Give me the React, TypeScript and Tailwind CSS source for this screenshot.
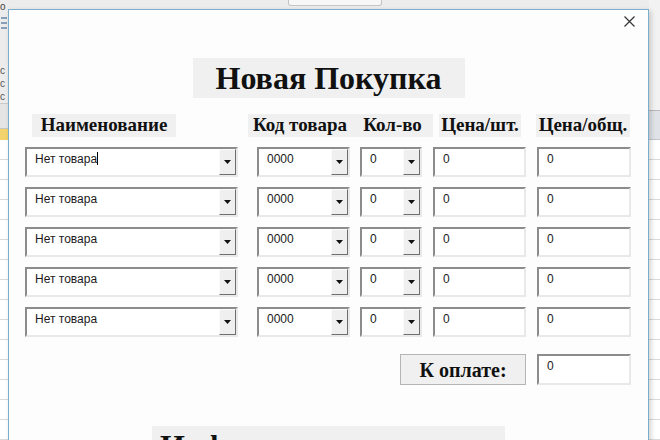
const serif = "font-['Liberation_Serif','Times_New_Roman',serif]";
const sans = "font-['Liberation_Sans',Tahoma,Arial,sans-serif]";

const sunken =
  "border-2 border-t-[#8c8c8c] border-l-[#8c8c8c] border-r-[#e9e9e9] border-b-[#e9e9e9] bg-white";

const Arrow = () => (
  <div className="w-[17px] h-full bg-[#efefef] border border-t-[#fbfbfb] border-l-[#fbfbfb] border-r-[#6f6f6f] border-b-[#6f6f6f] flex items-center justify-center">
    <svg width="7" height="4" viewBox="0 0 7 4">
      <path d="M0 0h7L3.5 4z" fill="#111" />
    </svg>
  </div>
);

const Combo = ({ w, value, caret }: { w: string; value: string; caret?: boolean }) => (
  <div className={`${w} h-[30px] ${sunken} flex`}>
    <div className={`flex-1 pl-[8px] pt-[3px] text-[12px] leading-[14px] text-[#1a1a1a] ${sans}`}>
      {value}
      {caret && <span className="inline-block w-px h-[13px] bg-black align-[-2px]" />}
    </div>
    <Arrow />
  </div>
);

const TextBox = ({ w }: { w: string }) => (
  <div className={`${w} h-[30px] ${sunken} pl-[8px] pt-[3px] text-[12px] leading-[14px] text-[#1a1a1a] ${sans}`}>
    0
  </div>
);

const Row = ({ caret }: { caret?: boolean }) => (
  <div className="flex pl-[16px]">
    <Combo w="w-[213px]" value="Нет товара" caret={caret} />
    <div className="ml-[19px]">
      <Combo w="w-[93px]" value="0000" />
    </div>
    <div className="ml-[10px]">
      <Combo w="w-[62px]" value="0" />
    </div>
    <div className="ml-[11px]">
      <TextBox w="w-[93px]" />
    </div>
    <div className="ml-[11px]">
      <TextBox w="w-[94px]" />
    </div>
  </div>
);

const Label = ({ children, w, ml }: { children: string; w: string; ml: string }) => (
  <div
    className={`${w} ${ml} h-[23px] bg-[#f0f0f0] flex items-center justify-center text-[19px] font-bold text-[#111] ${serif}`}
  >
    {children}
  </div>
);

const Lines = ({ count }: { count: number }) => (
  <div className="flex flex-col">
    {Array.from({ length: count }).map((_, i) => (
      <div key={i} className="h-[20px] border-b border-[#dadada] bg-white" />
    ))}
  </div>
);

export default function App() {
  return (
    <div className="relative w-[660px] h-[440px] overflow-hidden bg-[#ececec]">
      {/* excel behind */}
      <div className="flex h-full">
        <div className="w-[8px] flex flex-col">
          <div className={`h-[14px] text-[10px] leading-[14px] text-[#444] ${sans}`}>о</div>
          <div className="h-[26px] flex flex-col gap-[3px] pt-[3px] pl-[1px]">
            <div className="h-[2px] w-[6px] bg-[#8aa0b8]" />
            <div className="h-[2px] w-[6px] bg-[#8aa0b8]" />
            <div className="h-[2px] w-[6px] bg-[#8aa0b8]" />
          </div>
          <div className={`h-[70px] pt-[26px] text-[10px] leading-[13px] text-[#555] ${sans}`}>
            с
            <br />
            с
            <br />
            с
          </div>
          <div className="h-[1px] bg-[#c8c8c8]" />
          <div className="h-[28px] bg-[#e4e4e4] border-b border-[#c6c6c6]" />
          <div className="h-[12px] bg-[#f3d36b]" />
          <Lines count={15} />
        </div>
        <div className="flex-1 flex flex-col">
          <div className="h-[9px] flex pl-[280px]">
            <div className="w-[94px] h-[6px] bg-[#f7f7f7] border border-t-0 border-[#c4c4c4] rounded-b-[3px]" />
          </div>
        </div>
        <div className="w-[11px] flex flex-col">
          <div className="h-[110px] bg-[#f2f2f2]" />
          <div className="h-[1px] bg-[#b9b9b9]" />
          <div className="h-[29px] bg-[#dfe3e8] border-b border-[#c4c8cc]" />
          <Lines count={15} />
        </div>
      </div>

      {/* user form window */}
      <div className="absolute left-[8px] top-[9px] w-[641px] h-[460px] bg-[#fdfdfd] border border-[#7aaecb] shadow-[2px_2px_5px_rgba(0,0,0,0.18)] flex flex-col">
        <div className="h-[48px] flex justify-end pr-[13px] pt-[6px]">
          <svg width="11" height="11" viewBox="0 0 11 11">
            <path d="M0.5 0.5L10.5 10.5M10.5 0.5L0.5 10.5" stroke="#333" strokeWidth="1.2" />
          </svg>
        </div>

        <div
          className={`mx-auto w-[272px] h-[40px] bg-[#f0f0f0] flex items-center justify-center text-[32px] font-bold text-[#111] ${serif}`}
        >
          Новая Покупка
        </div>

        <div className="mt-[16px] flex">
          <Label w="w-[144px]" ml="ml-[23px]">Наименование</Label>
          <Label w="w-[104px]" ml="ml-[72px]">Код товара</Label>
          <Label w="w-[81px]" ml="ml-0">Кол-во</Label>
          <Label w="w-[82px]" ml="ml-[6px]">Цена/шт.</Label>
          <Label w="w-[94px]" ml="ml-[15px]">Цена/общ.</Label>
        </div>

        <div className="mt-[10px] flex flex-col gap-[10px]">
          <Row caret />
          <Row />
          <Row />
          <Row />
          <Row />
        </div>

        <div className="mt-[17px] flex pl-[391px] gap-[11px]">
          <div
            className={`w-[126px] h-[31px] bg-[#f0f0f0] border border-[#b5b5b5] flex items-center justify-center text-[20px] font-bold text-[#111] ${serif}`}
          >
            К оплате:
          </div>
          <div className={`w-[94px] h-[31px] ${sunken} pl-[8px] pt-[3px] text-[12px] leading-[14px] text-[#1a1a1a] ${sans}`}>
            0
          </div>
        </div>

        <div
          className={`mt-[41px] ml-[143px] w-[353px] h-[40px] bg-[#f0f0f0] pl-[8px] pt-[2px] text-[32px] leading-[36px] font-bold text-[#111] ${serif}`}
        >
          Информация
        </div>
      </div>
    </div>
  );
}
